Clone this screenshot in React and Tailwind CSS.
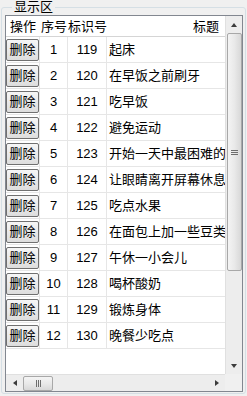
const rows = [
  [1, 119, "起床"],
  [2, 120, "在早饭之前刷牙"],
  [3, 121, "吃早饭"],
  [4, 122, "避免运动"],
  [5, 123, "开始一天中最困难的事"],
  [6, 124, "让眼睛离开屏幕休息"],
  [7, 125, "吃点水果"],
  [8, 126, "在面包上加一些豆类"],
  [9, 127, "午休一小会儿"],
  [10, 128, "喝杯酸奶"],
  [11, 129, "锻炼身体"],
  [12, 130, "晚餐少吃点"],
];

const Arrow = ({ dir }) => {
  const pts = {
    up: "1,6 4,2 7,6",
    down: "1,2 4,6 7,2",
    left: "6,1 2,4 6,7",
    right: "2,1 6,4 2,7",
  }[dir];
  return (
    <svg width="8" height="8" viewBox="0 0 8 8">
      <polygon points={pts} fill="#3c3c3c" />
    </svg>
  );
};

const App = () => {
  return (
    <div className="w-[247px] h-[396px] bg-[#f0f0f0] font-['Liberation_Sans','Noto_Sans_CJK_SC',sans-serif] text-[13px] text-black overflow-hidden">
      <fieldset className="mx-[1px] w-[245px] h-[394px] border border-[#d5dfe5] rounded-[3px] pl-[3px] pr-[1px] pt-[1px] m-0">
        <legend className="ml-[7px] px-[2px] text-[13px] leading-[14px]">显示区</legend>

        <div className="w-[238px] h-[377px] border border-[#828790] bg-white flex flex-col">
          <div className="flex h-[358px]">
            {/* table */}
            <div className="w-[219px] overflow-hidden flex flex-col">
              <div className="flex h-[21px] items-center border-b border-[#d5d5d5] leading-[21px] shrink-0">
                <div className="w-[34px] text-center">操作</div>
                <div className="w-[28px] text-center">序号</div>
                <div className="w-[39px] text-center">标识号</div>
                <div className="flex-1 text-right pr-[6px]">标题</div>
              </div>
              {rows.map(([no, id, title]) => (
                <div key={no} className="flex h-[26px] border-b border-[#e6e6e6] shrink-0">
                  <div className="w-[34px] border-r border-[#e6e6e6] flex items-center">
                    <button className="w-[33px] h-[22px] border border-[#707070] rounded-[2px] bg-gradient-to-b from-[#f6f6f6] to-[#dddddd] text-[13px] leading-[20px] p-0">
                      删除
                    </button>
                  </div>
                  <div className="w-[28px] border-r border-[#e6e6e6] text-center leading-[25px]">{no}</div>
                  <div className="w-[39px] border-r border-[#e6e6e6] text-center leading-[25px]">{id}</div>
                  <div className="flex-1 pl-[2px] whitespace-nowrap overflow-hidden leading-[25px]">{title}</div>
                </div>
              ))}
            </div>

            {/* vertical scrollbar */}
            <div className="w-[17px] bg-[#ededed] border-l border-[#e0e0e0] flex flex-col items-center">
              <div className="h-[17px] w-full flex items-center justify-center">
                <Arrow dir="up" />
              </div>
              <div className="w-[15px] h-[238px] border border-[#a8a8a8] rounded-[2px] bg-gradient-to-r from-[#f4f4f4] via-[#e9e9e9] to-[#d8d8d8] flex items-center justify-center">
                <div className="flex flex-col gap-[1px]">
                  <div className="w-[7px] h-[1px] bg-[#6e6e6e]" />
                  <div className="w-[7px] h-[1px] bg-[#6e6e6e]" />
                  <div className="w-[7px] h-[1px] bg-[#6e6e6e]" />
                </div>
              </div>
              <div className="flex-1" />
              <div className="h-[17px] w-full flex items-center justify-center">
                <Arrow dir="down" />
              </div>
            </div>
          </div>

          {/* horizontal scrollbar */}
          <div className="flex h-[17px]">
            <div className="w-[219px] bg-[#ededed] border-t border-[#e0e0e0] flex items-center">
              <div className="w-[17px] h-full flex items-center justify-center">
                <Arrow dir="left" />
              </div>
              <div className="w-[30px] h-[15px] border border-[#a8a8a8] rounded-[2px] bg-gradient-to-b from-[#f4f4f4] via-[#e9e9e9] to-[#d8d8d8] flex items-center justify-center gap-[1px]">
                <div className="w-[1px] h-[7px] bg-[#6e6e6e]" />
                <div className="w-[1px] h-[7px] bg-[#6e6e6e]" />
                <div className="w-[1px] h-[7px] bg-[#6e6e6e]" />
              </div>
              <div className="flex-1" />
              <div className="w-[17px] h-full flex items-center justify-center">
                <Arrow dir="right" />
              </div>
            </div>
            <div className="w-[17px] bg-[#f0f0f0]" />
          </div>
        </div>
      </fieldset>
    </div>
  );
};

export default App;
